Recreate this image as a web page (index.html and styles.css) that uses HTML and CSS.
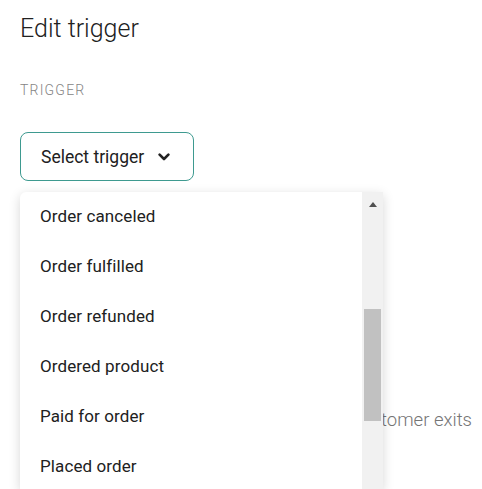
FILE: index.html
```html
<!DOCTYPE html>
<html lang="en">
<head>
<meta charset="utf-8">
<title>Edit trigger</title>
<link rel="stylesheet" href="styles.css">
</head>
<body>
<div class="page">
  <h1 class="title">Edit trigger</h1>
  <div class="label">TRIGGER</div>
  <div class="select-wrap">
    <button class="select-btn" type="button">
      <span>Select trigger</span>
      <svg class="chev" width="12" height="8" viewBox="0 0 12 8" aria-hidden="true">
        <polyline points="1.6,1.6 6,6 10.4,1.6" fill="none" stroke="#222" stroke-width="2.6" stroke-linecap="round" stroke-linejoin="round"/>
      </svg>
    </button>
    <div class="menu">
      <ul class="options">
        <li>Order canceled</li>
        <li>Order fulfilled</li>
        <li>Order refunded</li>
        <li>Ordered product</li>
        <li>Paid for order</li>
        <li>Placed order</li>
      </ul>
      <div class="scrollbar">
        <div class="sb-up"><span class="tri"></span></div>
        <div class="sb-thumb"></div>
      </div>
    </div>
  </div>
  <p class="behind">When a customer exits</p>
</div>
</body>
</html>
```
FILE: styles.css
```css
html, body {
  margin: 0;
  padding: 0;
  height: 489px;
  overflow: hidden;
  background: #ffffff;
  font-family: Roboto, "Liberation Sans", sans-serif;
  color: #212121;
}

.page {
  box-sizing: border-box;
  height: 489px;
  padding: 13px 10px 0 20px;
}

.title {
  margin: 0;
  font-size: 25px;
  line-height: 32px;
  font-weight: 300;
  color: #212121;
}

.label {
  margin-top: 37px;
  font-size: 14px;
  line-height: 16px;
  letter-spacing: 1.2px;
  font-weight: 300;
  color: #858585;
}

.select-wrap {
  position: relative;
  margin-top: 34px;
}

.select-btn {
  display: flex;
  align-items: center;
  gap: 14px;
  box-sizing: border-box;
  width: 174px;
  height: 49px;
  padding: 0 20px;
  border: 1px solid #3e9a90;
  border-radius: 8px;
  background: #fff;
  font-family: Roboto, "Liberation Sans", sans-serif;
  font-size: 17.5px;
  color: #212121;
}

.chev {
  display: block;
  flex: none;
}

.menu {
  position: absolute;
  left: 0;
  top: 60px;
  width: 363px;
  height: 297px;
  display: flex;
  background: #fff;
  border-radius: 6px 0 0 0;
  box-shadow: 0 3px 12px rgba(0, 0, 0, 0.16);
  z-index: 2;
}

.options {
  flex: 1;
  list-style: none;
  margin: -1px 0 0 0;
  padding: 0 0 0 20px;
}

.options li {
  font-size: 17px;
  letter-spacing: 0.1px;
  line-height: 50px;
  height: 50px;
  color: #212121;
}

.scrollbar {
  width: 21px;
  background: #f1f1f1;
  display: flex;
  flex-direction: column;
  align-items: center;
}

.sb-up {
  height: 20px;
  width: 100%;
  display: flex;
  justify-content: center;
  padding-top: 10px;
  box-sizing: border-box;
}

.tri {
  width: 0;
  height: 0;
  border-left: 4.5px solid transparent;
  border-right: 4.5px solid transparent;
  border-bottom: 5px solid #505050;
}

.sb-thumb {
  margin-top: 97px;
  width: 17px;
  height: 112px;
  background: #c1c1c1;
}

.behind {
  margin: 227px 0 0 0;
  text-align: right;
  font-size: 18.5px;
  line-height: 24px;
  font-weight: 300;
  color: #757575;
}
```
